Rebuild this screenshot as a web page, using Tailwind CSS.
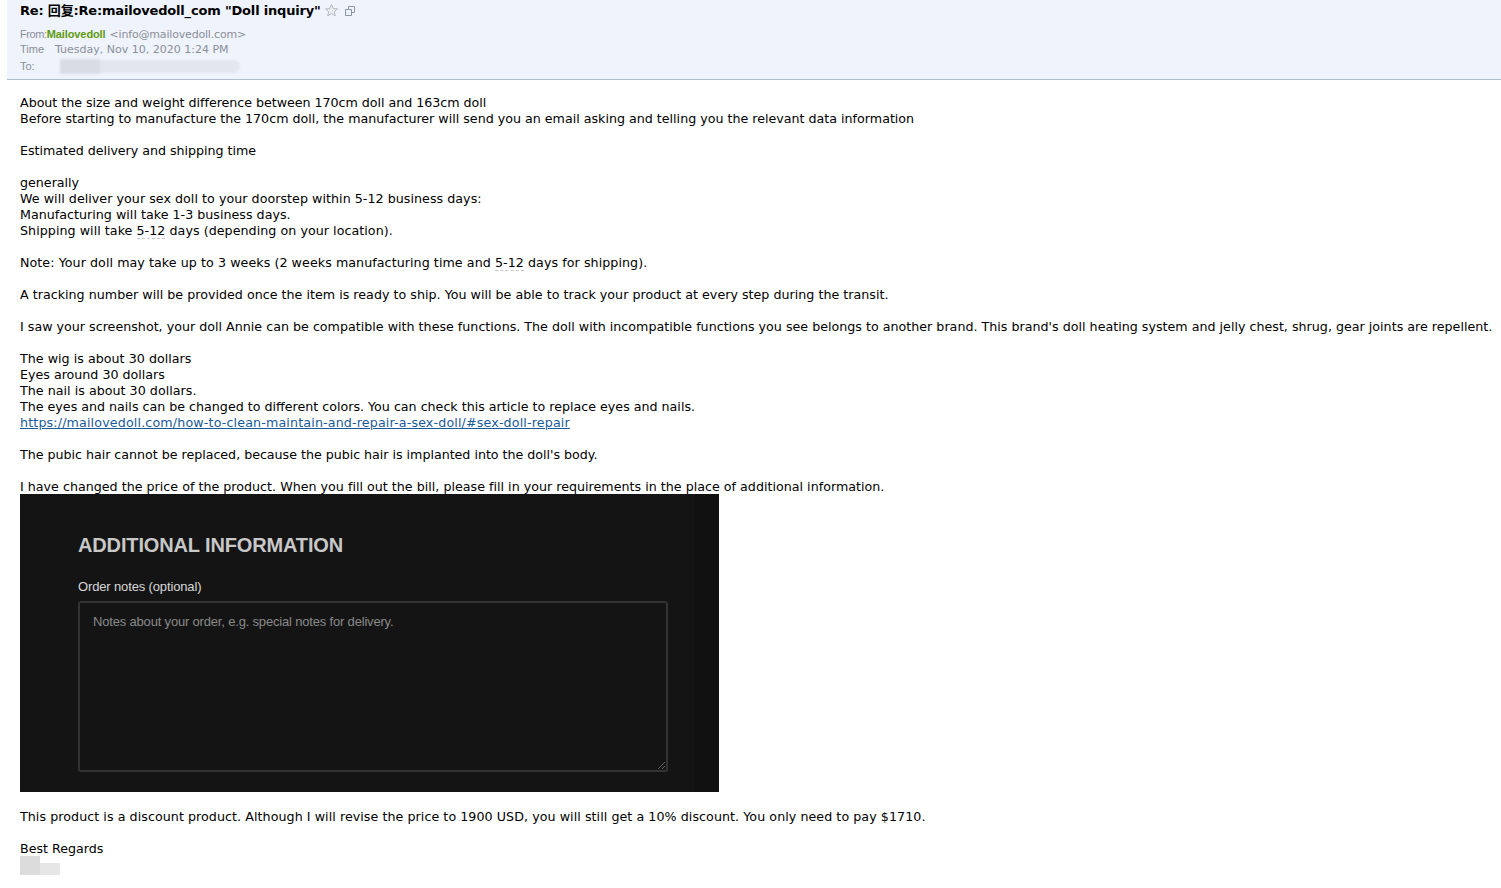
<!DOCTYPE html>
<html lang="en">
<head>
    <meta charset="UTF-8">
    <title>Mail</title>
    <script src="https://cdn.jsdelivr.net/npm/@tailwindcss/browser@4"></script>
</head>
<body class="bg-white h-[888px] overflow-hidden font-['DejaVu_Sans',sans-serif] text-[12.66px] text-black">
    <!-- Mail header -->
    <header class="ml-[7px] h-[80px] bg-[#eff3fb] border-b border-[#b0bccf] pl-[13px]">
        <div class="flex items-center h-[21px]">
            <h1 class="text-[13px] font-bold leading-[21px] font-['DejaVu_Sans','Noto_Sans_CJK_SC',sans-serif] tracking-[-0.18px]">Re: 回复:Re:mailovedoll_com "Doll inquiry"</h1>
            <svg class="ml-[3px] w-[15px] h-[15px]" viewBox="0 0 15 15" fill="#e8ebf0" stroke="#b4b9c2"><path d="M7.5 1.5l1.8 4 4.2.4-3.2 2.8 1 4.2-3.8-2.3-3.8 2.3 1-4.2L1.500 5.900l4.200-.4z"/></svg>
            <svg class="ml-[5px] w-[12px] h-[12px]" viewBox="0 0 12 12" fill="none" stroke="#8d96a5"><path d="M1.500 4.500h6v6h-6zM4.500 4.500v-3h6v6h-3"/></svg>
        </div>
        <div class="mt-[7px] flex h-[15px] items-end text-[11px] text-[#8a8f99]"><span class="mb-[1px] font-['Liberation_Sans',sans-serif] tracking-[-0.4px]">From:</span><span class="mb-[1px] font-['Liberation_Sans',sans-serif] font-bold text-[#5f9a10] tracking-[-0.1px]">Mailovedoll</span><span class="ml-[4px] tracking-[-0.18px]">&lt;info@mailovedoll.com&gt;</span></div>
        <div class="flex h-[15px] items-end text-[11px] text-[#8a8f99]"><span class="mb-[1px] w-[35px] font-['Liberation_Sans',sans-serif]">Time</span><span>Tuesday, Nov 10, 2020 1:24 PM</span></div>
        <div class="flex h-[16px] items-end text-[11px] text-[#8a8f99]"><span class="font-['Liberation_Sans',sans-serif]">To:</span>
            <div class="ml-[25px] flex h-[15px] items-center blur-[1px]"><div class="w-[40px] h-[15px] bg-[#d7dce5]"></div><div class="w-[140px] h-[13px] rounded-r-full bg-[#e2e6ee]"></div></div>
        </div>
    </header>

    <!-- Mail body -->
    <main class="pl-[20px] pt-[15px] leading-[16px] whitespace-nowrap">
        <p class="tracking-[-0.03px]">About the size and weight difference between 170cm doll and 163cm doll</p>
        <p>Before starting to manufacture the 170cm doll, the manufacturer will send you an email asking and telling you the relevant data information</p>
        <p class="mt-[16px] tracking-[-0.03px]">Estimated delivery and shipping time</p>
        <p class="mt-[16px]">generally</p>
        <p class="tracking-[0.04px]">We will deliver your sex doll to your doorstep within 5-12 business days:</p>
        <p class="tracking-[0.02px]">Manufacturing will take 1-3 business days.</p>
        <p class="tracking-[0.05px]">Shipping will take <span class="border-b border-dashed border-[#c8c8c8]">5-12</span> days (depending on your location).</p>
        <p class="mt-[16px] tracking-[0.065px]">Note: Your doll may take up to 3 weeks (2 weeks manufacturing time and <span class="border-b border-dashed border-[#c8c8c8]">5-12</span> days for shipping).</p>
        <p class="mt-[16px] tracking-[0.02px]">A tracking number will be provided once the item is ready to ship. You will be able to track your product at every step during the transit.</p>
        <p class="mt-[16px] tracking-[0.012px]">I saw your screenshot, your doll Annie can be compatible with these functions. The doll with incompatible functions you see belongs to another brand. This brand's doll heating system and jelly chest, shrug, gear joints are repellent.</p>
        <p class="mt-[16px] tracking-[0.03px]">The wig is about 30 dollars</p>
        <p>Eyes around 30 dollars</p>
        <p class="tracking-[0.03px]">The nail is about 30 dollars.</p>
        <p>The eyes and nails can be changed to different colors. You can check this article to replace eyes and nails.</p>
        <a class="block text-[#1a5a9a] underline tracking-[0.15px]" href="#">https://mailovedoll.com/how-to-clean-maintain-and-repair-a-sex-doll/#sex-doll-repair</a>
        <p class="mt-[16px] tracking-[-0.02px]">The pubic hair cannot be replaced, because the pubic hair is implanted into the doll's body.</p>
        <p class="mt-[16px] h-[15px] tracking-[0.015px]">I have changed the price of the product. When you fill out the bill, please fill in your requirements in the place of additional information.</p>

        <!-- Embedded screenshot -->
        <div class="w-[699px] h-[298px] bg-[linear-gradient(90deg,#141414_675px,#111111_675px)] pl-[58px] pt-[38px] font-['Liberation_Sans',sans-serif]">
            <h2 class="text-[20px] leading-[26px] font-bold text-[#c8c8c8] tracking-[-0.14px]">ADDITIONAL INFORMATION</h2>
            <label class="block mt-[21px] text-[13px] leading-[16px] text-[#d8d8d8] tracking-[-0.14px]">Order notes (optional)</label>
            <div class="relative mt-[6px] w-[590px] h-[171px] border-2 border-[#333333] rounded-[3px] pl-[13px] pt-[11px] text-[13px] text-[#8a8a8a] tracking-[-0.18px]">Notes about your order, e.g. special notes for delivery.
                <svg class="absolute right-[1px] bottom-[1px] w-[8px] h-[8px]" viewBox="0 0 8 8" stroke="#666666" fill="none"><path d="M1 8l7-7M5 8l3-3"/></svg>
            </div>
        </div>

        <p class="mt-[17px] tracking-[0.06px]">This product is a discount product. Although I will revise the price to 1900 USD, you will still get a 10% discount. You only need to pay $1710.</p>
        <p class="mt-[16px]">Best Regards</p>
        <div class="flex items-end h-[19px] -mt-[1px]"><div class="w-[20px] h-[19px] bg-[#dcdcdc]"></div><div class="w-[20px] h-[12px] bg-[#e6e6e6]"></div></div>
    </main>
</body>
</html>
